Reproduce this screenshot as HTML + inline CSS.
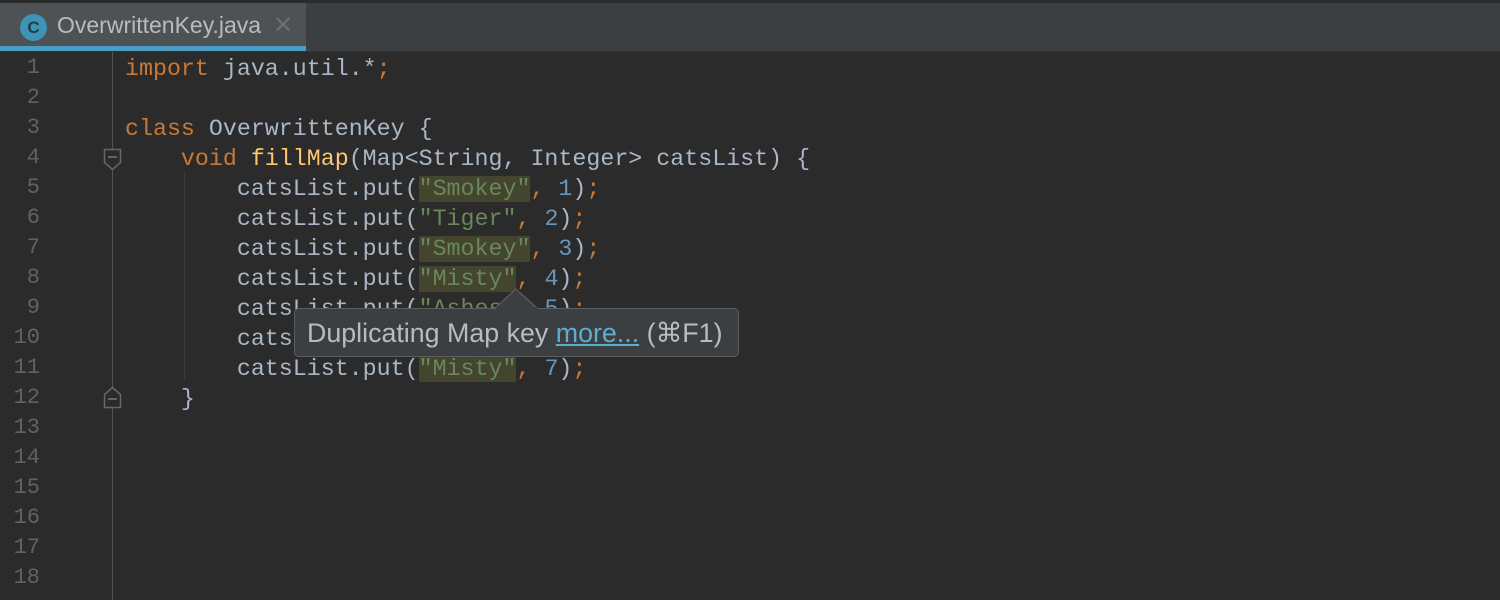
<!DOCTYPE html>
<html><head><style>
body{margin:0;width:1500px;height:600px;background:#2b2b2b;overflow:hidden;position:relative;font-family:"Liberation Mono",monospace}
.top{position:absolute;left:0;top:0;width:1500px;height:3px;background:#2b2b2b}
.tabbar{position:absolute;left:0;top:3px;width:1500px;height:48px;background:#3c3f41;border-bottom:1px solid #323232}
.tab{position:absolute;left:0;top:0;width:306px;height:43px;background:#4e5254}
.tab .u{position:absolute;left:0;bottom:-5px;width:306px;height:5px;background:#4a9cc0}
.ic{position:absolute;left:20px;top:11px;width:27px;height:27px;border-radius:50%;background:#3d94b5;color:#253a44;font:bold 17px "Liberation Sans",sans-serif;text-align:center;line-height:27px}
.tt{position:absolute;left:57px;top:9px;font:23px "Liberation Sans",sans-serif;color:#bbbbbb}
.x{position:absolute;left:273px;top:8px;font:24px "Liberation Sans",sans-serif;color:#6e6e6e}
.gl{position:absolute;left:112px;top:52px;width:1px;height:548px;background:#555}
.ig{position:absolute;left:184px;top:171px;width:1px;height:210px;background:#3b3b3b}
.num{position:absolute;left:0;width:40px;text-align:right;color:#606366;font-size:22px;line-height:30px}
.code{position:absolute;left:125px;top:54px;font-size:23.3px;line-height:30px;color:#a9b7c6;white-space:pre}
.k{color:#cc7832}.f{color:#ffc66d}.n{color:#6897bb}
.s{color:#6a8759;background:#44452f}
.tip{position:absolute;left:294px;top:308px;width:445px;height:49px;background:#3c3f41;border:1px solid #5b5e60;border-radius:5px;font:26.8px "Liberation Sans",sans-serif;color:#bbbbbb;line-height:48px;padding-left:12px;box-sizing:border-box;white-space:nowrap}
.tip a{color:#5eadd0;text-decoration:underline}
</style></head><body>
<div class="top"></div>
<div class="tabbar"><div class="tab"><div class="ic">C</div><div class="tt">OverwrittenKey.java</div><div class="x">✕</div><div class="u"></div></div></div>
<div class="gl"></div><div class="ig"></div>
<svg style="position:absolute;left:103px;top:148px" width="20" height="24"><path d="M1.5 1.5h16v13l-8 7l-8-7z" fill="#2b2b2b" stroke="#666" stroke-width="1.5"/><path d="M5 9h9" stroke="#777" stroke-width="1.5"/></svg>
<svg style="position:absolute;left:103px;top:386px" width="20" height="24"><path d="M9.5 1.5l8 7v13h-16v-13z" fill="#2b2b2b" stroke="#666" stroke-width="1.5"/><path d="M5 13h9" stroke="#777" stroke-width="1.5"/></svg>
<div class="num" style="top:53px">1</div><div class="num" style="top:83px">2</div><div class="num" style="top:113px">3</div><div class="num" style="top:143px">4</div><div class="num" style="top:173px">5</div><div class="num" style="top:203px">6</div><div class="num" style="top:233px">7</div><div class="num" style="top:263px">8</div><div class="num" style="top:293px">9</div><div class="num" style="top:323px">10</div><div class="num" style="top:353px">11</div><div class="num" style="top:383px">12</div><div class="num" style="top:413px">13</div><div class="num" style="top:443px">14</div><div class="num" style="top:473px">15</div><div class="num" style="top:503px">16</div><div class="num" style="top:533px">17</div><div class="num" style="top:563px">18</div>
<div class="code"><span class="k">import</span> java.util.*<span class="k">;</span>

<span class="k">class</span> OverwrittenKey {
    <span class="k">void</span> <span class="f">fillMap</span>(Map&lt;String, Integer&gt; catsList) {
        catsList.put(<span class="s">"Smokey"</span><span class="k">,</span> <span class="n">1</span>)<span class="k">;</span>
        catsList.put(<span class="s" style="background:none">"Tiger"</span><span class="k">,</span> <span class="n">2</span>)<span class="k">;</span>
        catsList.put(<span class="s">"Smokey"</span><span class="k">,</span> <span class="n">3</span>)<span class="k">;</span>
        catsList.put(<span class="s">"Misty"</span><span class="k">,</span> <span class="n">4</span>)<span class="k">;</span>
        catsList.put(<span class="s" style="background:none">"Ashes"</span><span class="k">,</span> <span class="n">5</span>)<span class="k">;</span>
        catsList.put(<span class="s" style="background:none">"Bella"</span><span class="k">,</span> <span class="n">6</span>)<span class="k">;</span>
        catsList.put(<span class="s">"Misty"</span><span class="k">,</span> <span class="n">7</span>)<span class="k">;</span>
    }
</div>
<svg style="position:absolute;left:494px;top:288px" width="46" height="22"><path d="M0 21L22 1L44 21" fill="#3c3f41" stroke="#5b5e60" stroke-width="1.2"/></svg>
<div class="tip">Duplicating Map key <a>more...</a> (⌘F1)</div>
<div style="position:absolute;left:496px;top:307px;width:42px;height:3px;background:#3c3f41"></div>
</body></html>
